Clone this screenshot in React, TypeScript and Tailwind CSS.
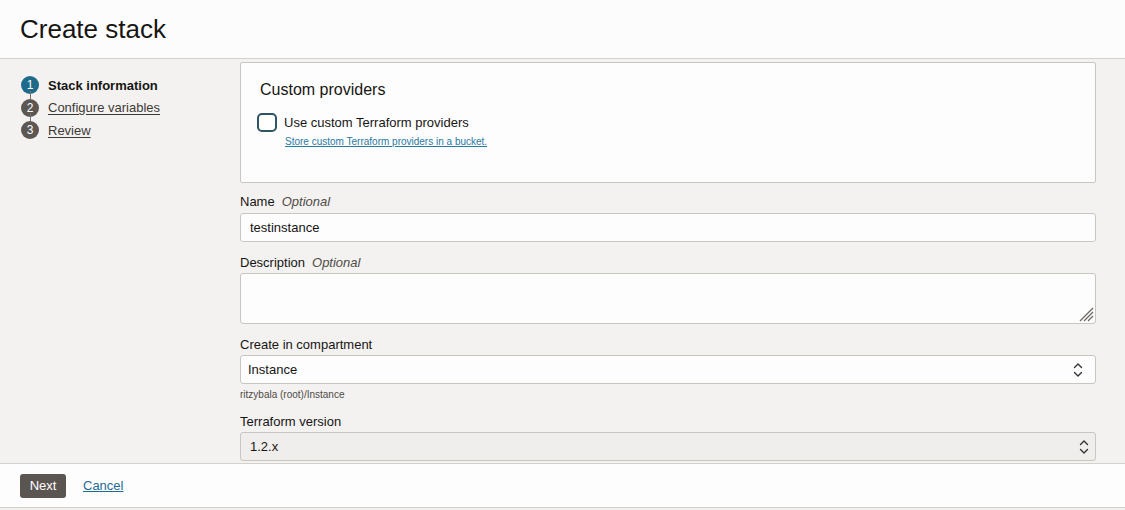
import React from "react";

const font = { fontFamily: '"Liberation Sans", Arial, sans-serif' };

const UpDown = () => (
  <svg width="12" height="16" viewBox="0 0 12 16" fill="none" stroke="#333" strokeWidth="1.4" strokeLinecap="round" strokeLinejoin="round">
    <path d="M2.5 5.5 L6 2 L9.5 5.5" />
    <path d="M2.5 10.5 L6 14 L9.5 10.5" />
  </svg>
);

const Label = ({ text, optional }: { text: string; optional?: boolean }) => (
  <div className="text-[13px] leading-[16px] text-[#161513]">
    {text}
    {optional && <span className="italic text-[#4f4b47] ml-[7px]">Optional</span>}
  </div>
);

const steps = [
  { n: 1, label: "Stack information", active: true },
  { n: 2, label: "Configure variables", active: false },
  { n: 3, label: "Review", active: false },
];

export default function App() {
  return (
    <div className="w-[1125px] h-[510px] overflow-hidden bg-white flex flex-col text-[#161513]" style={font}>
      {/* header */}
      <div className="h-[59px] shrink-0 bg-[#fcfcfc] border-b border-[#d4d1cd] pl-[20px] pt-[13px]">
        <h1 className="text-[26px] leading-[32px] text-[#161513]">Create stack</h1>
      </div>

      {/* body */}
      <div className="h-[404px] shrink-0 flex bg-[#f3f2f0] overflow-hidden">
        <div className="w-[240px] shrink-0 pl-[21px] pt-[15px]">
          {steps.map((s, i) => (
            <div key={s.n} className="flex items-center gap-[9px] h-[22.5px] relative">
              {i > 0 && <div className="absolute left-[9px] top-[-6px] w-px h-[8px] bg-[#77716c]" />}
              <div
                className={`w-[18px] h-[18px] rounded-full flex items-center justify-center text-[12px] text-white relative ${
                  s.active ? "bg-[#1e6a8a]" : "bg-[#5c5753]"
                }`}
              >
                {s.n}
              </div>
              {s.active ? (
                <span className="text-[13px] font-bold text-[#161513]">{s.label}</span>
              ) : (
                <span className="text-[13px] text-[#3d3935] underline underline-offset-2">{s.label}</span>
              )}
            </div>
          ))}
        </div>

        <div className="flex-1 pr-[29px] pt-[3px] flex flex-col">
          <div className="h-[121px] shrink-0 bg-[#fdfdfd] border border-[#c9c6c2] rounded-[2px] pl-[16px] pt-[17px]">
            <div className="text-[16px] leading-[20px] ml-[3px] text-[#161513]">Custom providers</div>
            <div className="flex items-center mt-[13px] gap-[7px]">
              <div className="w-[20px] h-[19px] rounded-[5px] border-2 border-[#2f5565] bg-white" />
              <span className="text-[13px] leading-[16px]">Use custom Terraform providers</span>
            </div>
            <div className="ml-[28px] mt-[4px] text-[10px] leading-[12px] text-[#2a7aa3] underline">
              Store custom Terraform providers in a bucket.
            </div>
          </div>

          <div className="mt-[11px]">
            <Label text="Name" optional />
          </div>
          <div className="mt-[3px] h-[29px] bg-[#fdfdfd] border border-[#c9c6c2] rounded-[3px] flex items-center pl-[9px] text-[13px]">
            testinstance
          </div>

          <div className="mt-[13px]">
            <Label text="Description" optional />
          </div>
          <div className="relative mt-[2px] h-[51px] shrink-0">
            <textarea
              className="h-full w-full resize-none bg-[#fdfdfd] border border-[#c9c6c2] rounded-[3px] outline-none block"
              readOnly
            />
            <svg className="absolute right-[2px] bottom-[2px]" width="16" height="16" viewBox="0 0 16 16" stroke="#6b6763" strokeWidth="1.2">
              <path d="M15 2 L2 15" />
              <path d="M15 6 L6 15" />
              <path d="M15 10 L10 15" />
            </svg>
          </div>

          <div className="mt-[13px]">
            <Label text="Create in compartment" />
          </div>
          <div className="mt-[2px] h-[29px] bg-[#fdfdfd] border border-[#c9c6c2] rounded-[3px] flex items-center justify-between pl-[7px] pr-[11px] text-[13px]">
            <span>Instance</span>
            <UpDown />
          </div>
          <div className="mt-[5px] text-[10px] leading-[12px] text-[#4f4b47]">ritzybala (root)/Instance</div>

          <div className="mt-[13px]">
            <Label text="Terraform version" />
          </div>
          <div className="mt-[2px] h-[29px] bg-[#efeeec] border border-[#c9c6c2] rounded-[3px] flex items-center justify-between pl-[9px] pr-[5px] text-[13px]">
            <span>1.2.x</span>
            <UpDown />
          </div>
        </div>
      </div>

      {/* footer */}
      <div className="h-[45px] shrink-0 bg-[#fdfdfd] border-t border-b border-[#d4d1cd] flex items-center pl-[20px] gap-[17px]">
        <button className="w-[46px] h-[24px] rounded-[3px] bg-[#5b5551] text-white text-[13px]">Next</button>
        <span className="text-[13px] text-[#1f6a94] underline">Cancel</span>
      </div>
      <div className="flex-1 bg-[#f3f2f0]" />
    </div>
  );
}
